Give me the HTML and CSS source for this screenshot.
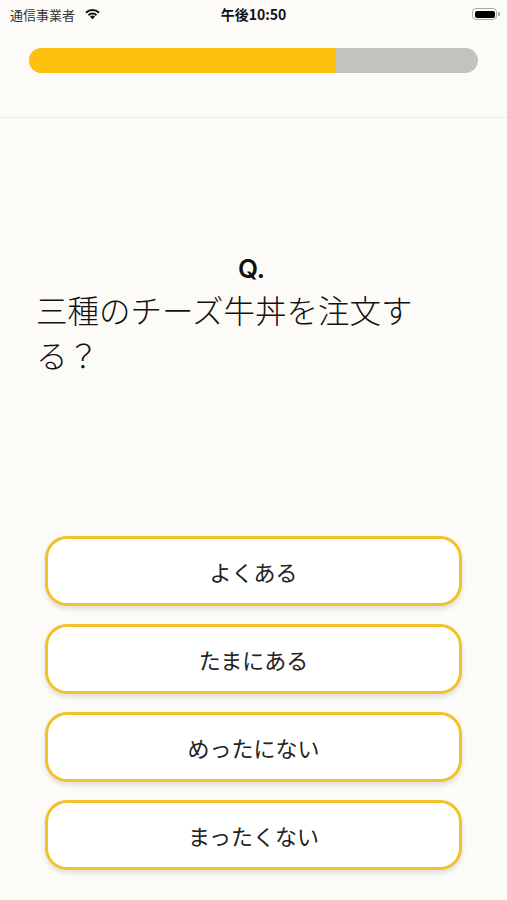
FILE: index.html
```html
<!DOCTYPE html>
<html lang="ja">
<head>
    <meta charset="UTF-8">
    <meta name="viewport" content="width=device-width, initial-scale=1.0">
    <title>質問</title>
    <link rel="stylesheet" href="styles.css">
</head>
<body>
    <div class="status-bar">
        <div class="status-left">
            <span class="carrier">通信事業者</span>
            <svg class="wifi" width="17" height="13" viewBox="0 0 16 12">
                <path d="M8 11.5 L5.6 9 A3.4 3.4 0 0 1 10.4 9 Z" fill="#111"/>
                <path d="M3.6 7 A6.2 6.2 0 0 1 12.4 7 L11.1 8.3 A4.4 4.4 0 0 0 4.9 8.3 Z" fill="#111"/>
                <path d="M1.2 4.6 A9.6 9.6 0 0 1 14.8 4.6 L13.5 5.9 A7.8 7.8 0 0 0 2.5 5.9 Z" fill="#111"/>
            </svg>
        </div>
        <div class="status-time">午後10:50</div>
        <div class="status-right">
            <div class="battery"><div class="battery-level"></div></div>
            <div class="battery-nub"></div>
        </div>
    </div>

    <div class="progress-wrap">
        <div class="progress">
            <div class="progress-fill" style="width: 68.4%;"></div>
        </div>
    </div>

    <div class="question">
        <div class="q-label">Q.</div>
        <p class="q-text">三種のチーズ牛丼を注文する？</p>
    </div>

    <div class="answers">
        <button class="answer">よくある</button>
        <button class="answer">たまにある</button>
        <button class="answer">めったにない</button>
        <button class="answer">まったくない</button>
    </div>
</body>
</html>
```

FILE: styles.css
```css
body {
    margin: 0;
    background: #fdfbf8;
    font-family: "Noto Sans CJK JP", "Noto Sans", sans-serif;
    color: #1c1c1c;
    width: 507px;
    height: 900px;
    overflow: hidden;
}

.status-bar {
    height: 28px;
    display: flex;
    align-items: center;
    justify-content: space-between;
    padding: 0 7px 0 10px;
    position: relative;
}

.status-left {
    display: flex;
    align-items: center;
    gap: 9px;
}

.carrier {
    font-size: 13px;
    color: #333;
}

.wifi {
    margin-top: -1px;
}

.status-time {
    position: absolute;
    left: 0;
    right: 0;
    text-align: center;
    font-size: 14px;
    font-weight: bold;
    color: #111;
    pointer-events: none;
}

.status-right {
    display: flex;
    align-items: center;
}

.battery {
    width: 25px;
    height: 12px;
    border: 1.5px solid #aaa;
    border-radius: 4px;
    padding: 1.5px;
    box-sizing: border-box;
    display: flex;
}

.battery-level {
    flex: 1;
    background: #000;
    border-radius: 2px;
}

.battery-nub {
    width: 2px;
    height: 4px;
    background: #aaa;
    border-radius: 0 1px 1px 0;
    margin-left: 1px;
}

.progress-wrap {
    padding: 20px 29px 44px;
    border-bottom: 1px solid #eeebe7;
}

.progress {
    height: 25px;
    background: #c4c2bf;
    border-radius: 13px;
    overflow: hidden;
}

.progress-fill {
    height: 100%;
    background: #fdc00c;
}

.question {
    padding: 136px 60px 0 36px;
    height: 418px;
    box-sizing: border-box;
}

.q-label {
    text-align: center;
    font-family: Inter, "Noto Sans", sans-serif;
    font-weight: 600;
    font-size: 26px;
    line-height: 30px;
    color: #111;
    padding-left: 20px;
}

.q-text {
    margin: 3px 0 0;
    font-size: 31.5px;
    font-weight: 300;
    line-height: 45px;
    color: #111;
}

.answers {
    display: flex;
    flex-direction: column;
    gap: 18px;
    padding: 0 45px;
}

.answer {
    height: 70px;
    background: #fff;
    border: 3px solid #f3c22b;
    border-radius: 22px;
    box-shadow: 0 3px 5px rgba(0, 0, 0, 0.12);
    font-family: "Noto Sans CJK JP", sans-serif;
    font-size: 22px;
    font-weight: 400;
    color: #222;
    cursor: pointer;
}
```
